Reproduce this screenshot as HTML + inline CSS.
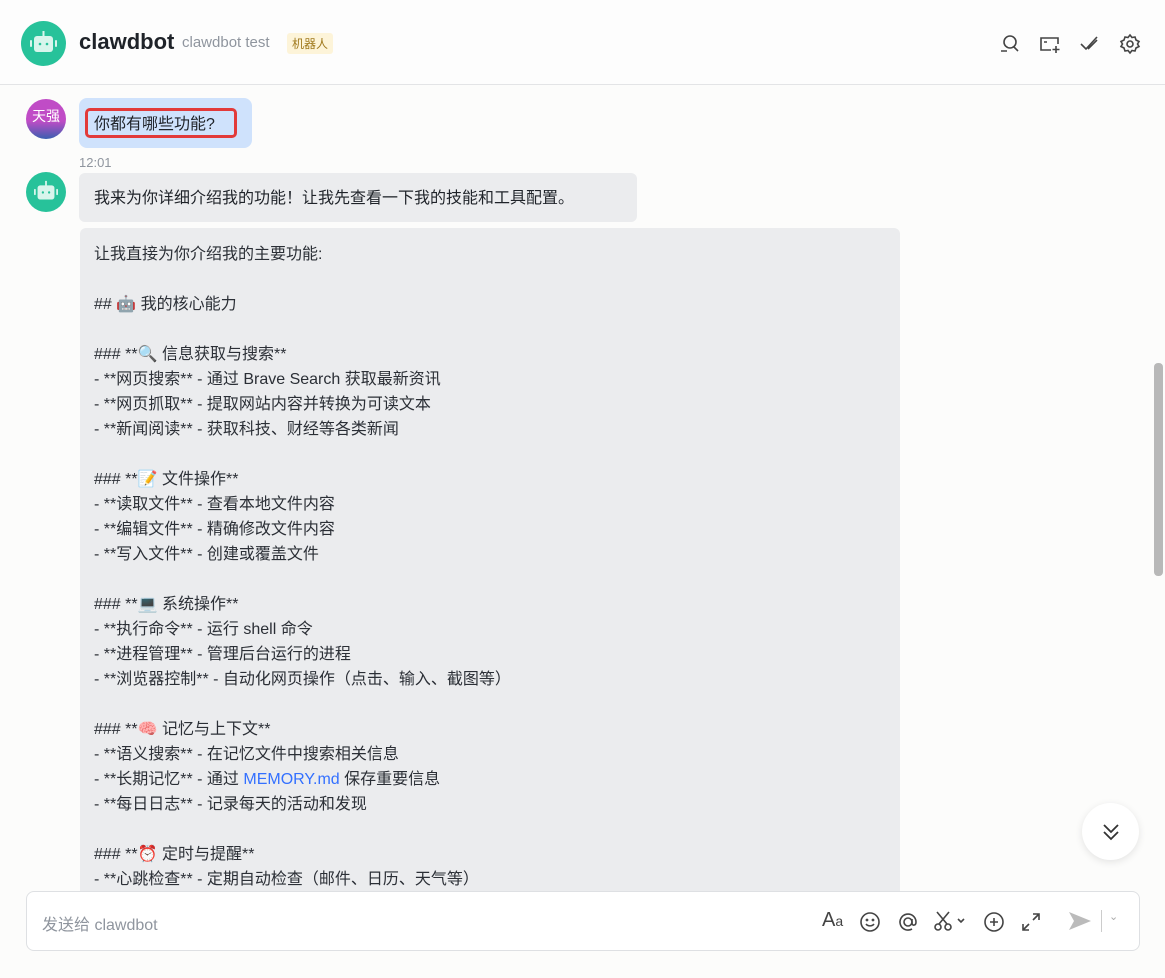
<!DOCTYPE html>
<html><head><meta charset="utf-8"><style>
*{margin:0;padding:0;box-sizing:border-box}
body{width:1165px;height:978px;overflow:hidden;background:#fcfcfb;font-family:"Liberation Sans","Noto Sans CJK SC",sans-serif;color:#1f2329;position:relative}
.hdr{position:absolute;left:0;top:0;width:1165px;height:85px;border-bottom:1px solid #e3e4e6;background:#fdfdfd}
.av{position:absolute;border-radius:50%;background:#27c29a}
.msg{position:absolute;font-size:16px;line-height:25px}
.pre{position:absolute;left:80px;top:228px;width:820px;height:670px;background:#ebecee;border-radius:6px;padding:14px 14px;font-size:16px;line-height:25px;white-space:pre;color:#2b2f36}
.input{position:absolute;left:26px;top:891px;width:1114px;height:60px;border:1px solid #dee0e3;border-radius:8px;background:#fff}
.ic{position:absolute}
</style></head><body>
<div class="hdr">
 <svg class="ic" style="left:21px;top:21px" width="45" height="45" viewBox="0 0 45 45"><circle cx="22.5" cy="22.5" r="22.5" fill="#27c29a"/><rect x="21.5" y="10" width="2" height="6" fill="#d8f5ec"/><rect x="13" y="15" width="19" height="16" rx="3" fill="#d8f5ec"/><rect x="9" y="19" width="2" height="7" rx="1" fill="#d8f5ec"/><rect x="34" y="19" width="2" height="7" rx="1" fill="#d8f5ec"/><circle cx="19" cy="23" r="1.3" fill="#27c29a"/><circle cx="26" cy="23" r="1.3" fill="#27c29a"/></svg>
 <div style="position:absolute;left:79px;top:29px;font-size:22px;font-weight:bold;color:#1f2329">clawdbot</div>
 <div style="position:absolute;left:182px;top:34px;font-size:15px;color:#8f959e">clawdbot test</div>
 <div style="position:absolute;left:287px;top:33px;font-size:12px;color:#a07a1e;background:#fdf4d9;padding:2px 5px;border-radius:3px">机器人</div>
 <svg class="ic" style="left:998px;top:32px" width="24" height="24" viewBox="0 0 24 24" fill="none" stroke="#444" stroke-width="1.6"><circle cx="12" cy="10" r="6"/><path d="M16 15l4 4M3 19h6"/></svg>
 <svg class="ic" style="left:1038px;top:32px" width="24" height="24" viewBox="0 0 24 24" fill="none" stroke="#444" stroke-width="1.6"><path d="M13 18H3V6h17v6M6 10h3M18 14v7M14.5 17.5h7"/></svg>
 <svg class="ic" style="left:1078px;top:32px" width="24" height="24" viewBox="0 0 24 24" fill="none" stroke="#444" stroke-width="1.6"><path d="M3 12l5 5L19 5M10 17l9-9"/></svg>
 <svg class="ic" style="left:1118px;top:32px" width="24" height="24" viewBox="0 0 24 24" fill="none" stroke="#444" stroke-width="1.6"><circle cx="12" cy="12" r="3"/><path d="M12 3l2 2.5 3-.5 1 3 3 1.5-1.5 2.5 1.5 2.5-3 1.5-1 3-3-.5L12 21l-2-2.5-3 .5-1-3-3-1.5L4.5 12 3 9.5 6 8l1-3 3 .5z"/></svg>
</div>
<div class="av" style="left:26px;top:99px;width:40px;height:40px;background:linear-gradient(#c04cc6 55%,#3a5fb0);color:#fff;font-size:14px;text-align:center;line-height:34px">天强</div>
<div style="position:absolute;left:79px;top:98px;width:173px;height:50px;background:#cfe2fc;border-radius:8px"></div>
<div style="position:absolute;left:85px;top:108px;width:152px;height:30px;border:3px solid #e23a3a;border-radius:5px"></div>
<div class="msg" style="left:94px;top:112px;color:#1f2329">你都有哪些功能?</div>
<div style="position:absolute;left:79px;top:155px;font-size:13px;color:#8f959e">12:01</div>
<svg class="ic" style="left:26px;top:172px" width="40" height="40" viewBox="0 0 45 45"><circle cx="22.5" cy="22.5" r="22.5" fill="#27c29a"/><rect x="21.5" y="10" width="2" height="6" fill="#d8f5ec"/><rect x="13" y="15" width="19" height="16" rx="3" fill="#d8f5ec"/><rect x="9" y="19" width="2" height="7" rx="1" fill="#d8f5ec"/><rect x="34" y="19" width="2" height="7" rx="1" fill="#d8f5ec"/><circle cx="19" cy="23" r="1.3" fill="#27c29a"/><circle cx="26" cy="23" r="1.3" fill="#27c29a"/></svg>
<div style="position:absolute;left:79px;top:173px;width:558px;height:49px;background:#ebecee;border-radius:6px"></div>
<div class="msg" style="left:94px;top:186px">我来为你详细介绍我的功能！让我先查看一下我的技能和工具配置。</div>
<div class="pre">让我直接为你介绍我的主要功能:

## 🤖 我的核心能力

### **🔍 信息获取与搜索**
- **网页搜索** - 通过 Brave Search 获取最新资讯
- **网页抓取** - 提取网站内容并转换为可读文本
- **新闻阅读** - 获取科技、财经等各类新闻

### **📝 文件操作**
- **读取文件** - 查看本地文件内容
- **编辑文件** - 精确修改文件内容
- **写入文件** - 创建或覆盖文件

### **💻 系统操作**
- **执行命令** - 运行 shell 命令
- **进程管理** - 管理后台运行的进程
- **浏览器控制** - 自动化网页操作（点击、输入、截图等）

### **🧠 记忆与上下文**
- **语义搜索** - 在记忆文件中搜索相关信息
- **长期记忆** - 通过 <span style="color:#3370ff">MEMORY.md</span> 保存重要信息
- **每日日志** - 记录每天的活动和发现

### **⏰ 定时与提醒**
- **心跳检查** - 定期自动检查（邮件、日历、天气等）</div>
<div style="position:absolute;left:1154px;top:363px;width:9px;height:213px;background:#b8b8b8;border-radius:4px"></div>
<div style="position:absolute;left:1082px;top:803px;width:57px;height:57px;border-radius:50%;background:#fff;box-shadow:0 2px 8px rgba(0,0,0,.1)"></div>
<svg class="ic" style="left:1099px;top:820px" width="24" height="24" viewBox="0 0 24 24" fill="none" stroke="#333" stroke-width="1.8"><path d="M5 5l7 7 7-7M5 12l7 7 7-7"/></svg>
<div class="input">
 <div style="position:absolute;left:15px;top:19px;font-size:16px;color:#8f959e">发送给 clawdbot</div>
 <div style="position:absolute;left:795px;top:17px;font-size:20px;color:#444">A<span style="font-size:14px">a</span></div>
 <svg class="ic" style="left:832px;top:19px" width="22" height="22" viewBox="0 0 22 22" fill="none" stroke="#444" stroke-width="1.6"><circle cx="11" cy="11" r="9"/><path d="M7 13c2 2.5 6 2.5 8 0"/><circle cx="8" cy="9" r=".6"/><circle cx="14" cy="9" r=".6"/></svg>
 <svg class="ic" style="left:870px;top:19px" width="22" height="22" viewBox="0 0 22 22" fill="none" stroke="#444" stroke-width="1.6"><circle cx="11" cy="11" r="4"/><path d="M15 8v4c0 3 4 3 4-1a8 8 0 1 0-4 7"/></svg>
 <svg class="ic" style="left:906px;top:17px" width="36" height="24" viewBox="0 0 36 24" fill="none" stroke="#444" stroke-width="1.6"><circle cx="5" cy="18" r="3"/><circle cx="15" cy="18" r="3"/><path d="M6 15L16 3M14 15L4 3M25 10l3 3 3-3"/></svg>
 <svg class="ic" style="left:956px;top:19px" width="22" height="22" viewBox="0 0 22 22" fill="none" stroke="#444" stroke-width="1.6"><circle cx="11" cy="11" r="9"/><path d="M11 7v8M7 11h8"/></svg>
 <svg class="ic" style="left:993px;top:19px" width="22" height="22" viewBox="0 0 22 22" fill="none" stroke="#444" stroke-width="1.6"><path d="M13 3h6v6M19 3l-6 6M9 19H3v-6M3 19l6-6"/></svg>
 <svg class="ic" style="left:1040px;top:17px" width="26" height="24" viewBox="0 0 26 24"><path d="M2 3l22 9-22 9 5-9z" fill="#bbb"/></svg>
 <div style="position:absolute;left:1074px;top:18px;width:1px;height:22px;background:#ccc"></div>
 <div style="position:absolute;left:1082px;top:18px;font-size:11px;color:#aaa">⌄</div>
</div>
</body></html>
